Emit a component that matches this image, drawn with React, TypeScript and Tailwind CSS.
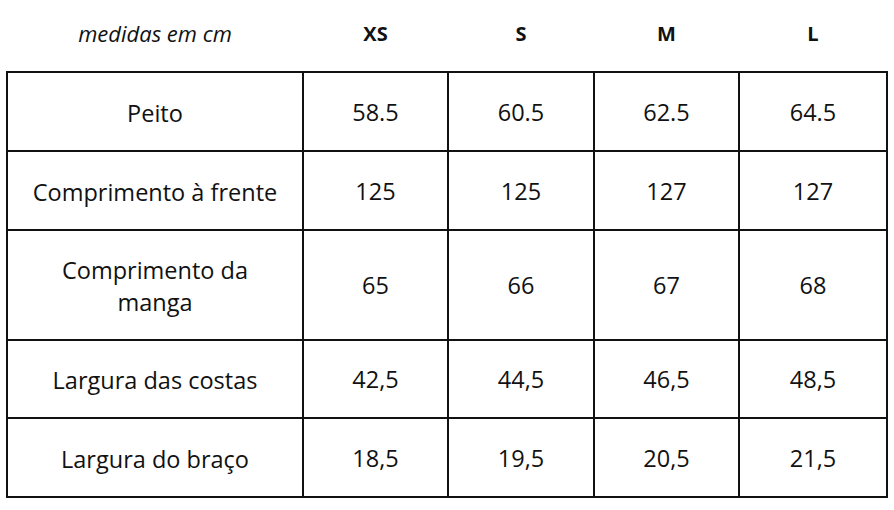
const sizes = ['XS', 'S', 'M', 'L']

const rows = [
    {label: 'Peito', values: ['58.5', '60.5', '62.5', '64.5'], h: 'h-[79px]'},
    {label: 'Comprimento à frente', values: ['125', '125', '127', '127'], h: 'h-[79px]'},
    {label: 'Comprimento da manga', values: ['65', '66', '67', '68'], h: 'h-[110px]'},
    {label: 'Largura das costas', values: ['42,5', '44,5', '46,5', '48,5'], h: 'h-[78px]'},
    {label: 'Largura do braço', values: ['18,5', '19,5', '20,5', '21,5'], h: 'h-[79px]'},
]

export default function App() {
    return (
        <div className="w-[894px] h-[510px] bg-white pl-[6px] text-[#111] font-['Open_Sans',sans-serif]">
            <table className="border-collapse table-fixed w-[880px]">
                <colgroup>
                    <col className="w-[296px]"/>
                    <col className="w-[145px]"/>
                    <col className="w-[146px]"/>
                    <col className="w-[145px]"/>
                    <col className="w-[148px]"/>
                </colgroup>
                <thead>
                <tr className="h-[72px]">
                    <th className="italic font-normal text-[22px] pb-[4px]">medidas em cm</th>
                    {sizes.map((s) => (
                        <th key={s} className="font-bold text-[20px] pb-[4px]">{s}</th>
                    ))}
                </tr>
                </thead>
                <tbody>
                {rows.map((r) => (
                    <tr key={r.label} className={r.h}>
                        <td className="border-2 border-[#111] text-center text-[23.5px] leading-[32px] px-[22px] pt-[2px]">
                            {r.label}
                        </td>
                        {r.values.map((v, i) => (
                            <td key={i} className="border-2 border-[#111] text-center text-[23.5px] pt-[2px]">{v}</td>
                        ))}
                    </tr>
                ))}
                </tbody>
            </table>
        </div>
    )
}
